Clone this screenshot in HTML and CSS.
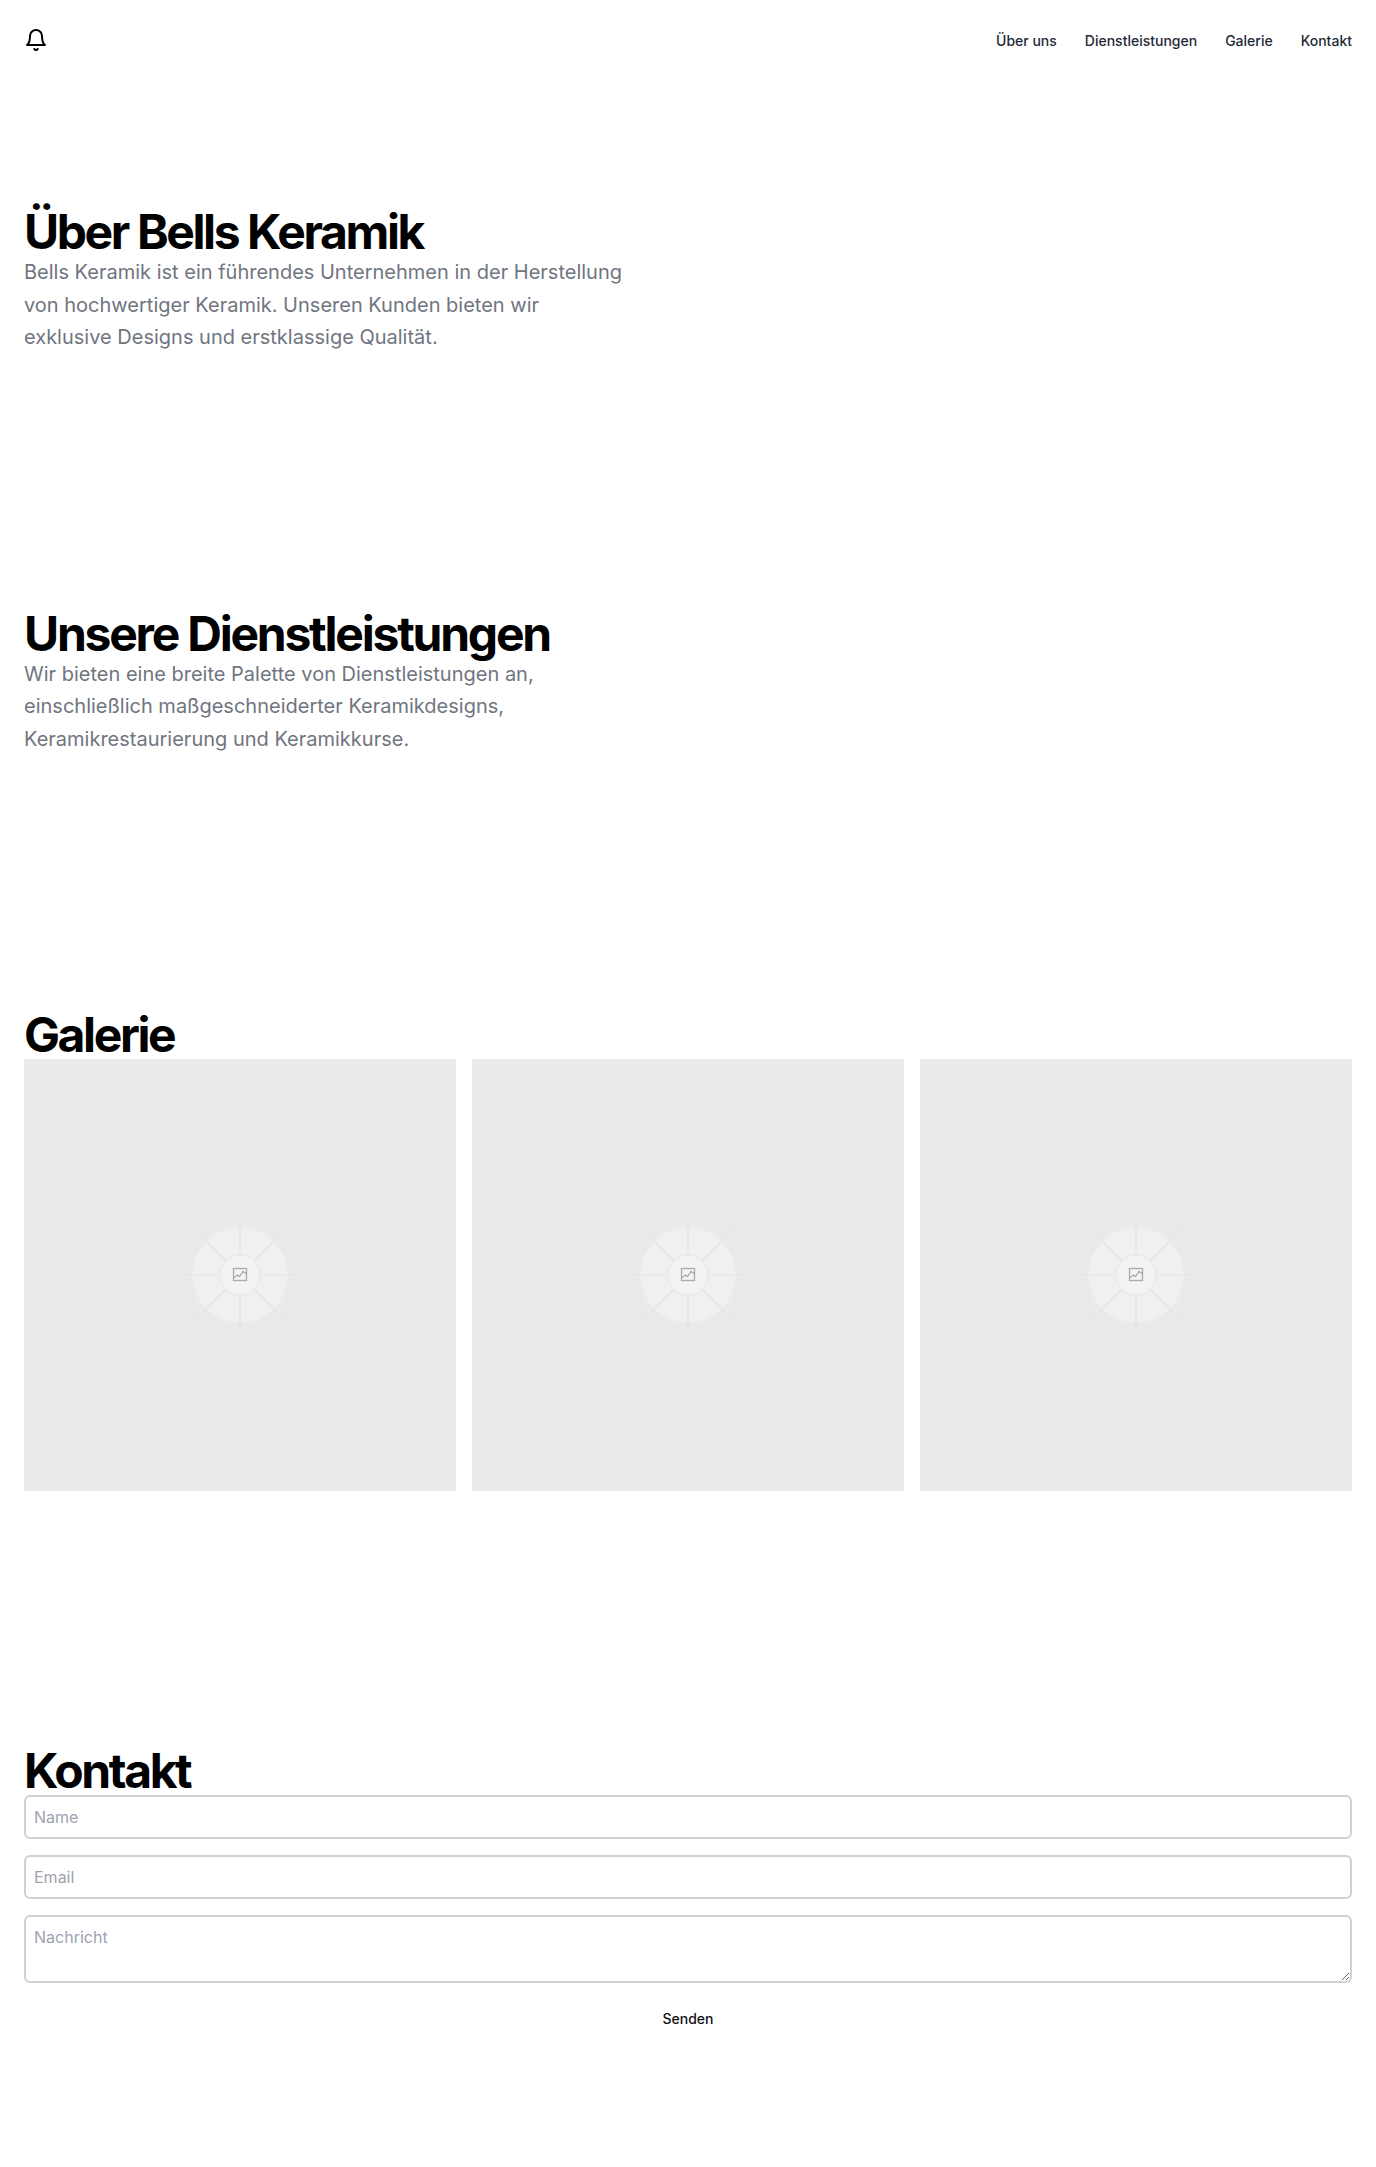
FILE: index.html

```html
<!DOCTYPE html>
<html lang="de">
<head>
    <meta charset="UTF-8">
    <meta name="viewport" content="width=device-width, initial-scale=1.0">
    <title>Bells Keramik</title>
    <link rel="stylesheet" href="styles.css">
</head>
<body>

    <!-- gallery placeholder, used three times below -->
    <svg class="defs" width="0" height="0">
        <defs>
            <radialGradient id="ray" gradientUnits="userSpaceOnUse" cx="0" cy="0" r="86">
                <stop offset="0.7" stop-color="#e3e3e3"/>
                <stop offset="1" stop-color="#e3e3e3" stop-opacity="0"/>
            </radialGradient>
            <symbol id="placeholder" viewBox="-85 -85 170 170">
                <circle r="48" fill="#f0f0f0" stroke="#ececec"/>
                <path d="M0 -62V-20M0 20V62M-62 0H-20M20 0H62M-60 -60L-14 -14M14 14L60 60M60 -60L14 -14M-14 14L-60 60" fill="none" stroke="url(#ray)" stroke-width="1.200"/>
                <circle r="20" fill="#f3f3f3" stroke="#e6e6e6"/>
                <rect x="-6.500" y="-6.500" width="13" height="12" fill="none" stroke="#aaa" stroke-width="1.300"/>
                <path d="M-6.500 3L-2.500 0L-0.500 1.500L3 -3.500L6.500 -1" fill="none" stroke="#aaa" stroke-width="1.300"/>
            </symbol>
        </defs>
    </svg>

    <header class="header">
        <a class="logo" href="#">
            <svg width="24" height="24" viewBox="0 0 24 24" fill="none" stroke="currentColor" stroke-width="2" stroke-linecap="round" stroke-linejoin="round">
                <path d="M6 8a6 6 0 0 1 12 0c0 7 3 9 3 9H3s3-2 3-9"/>
                <path d="M10.3 21a1.94 1.94 0 0 0 3.4 0"/>
            </svg>
        </a>
        <nav class="nav">
            <a href="#ueber">Über uns</a>
            <a href="#dienste">Dienstleistungen</a>
            <a href="#galerie">Galerie</a>
            <a href="#kontakt">Kontakt</a>
        </nav>
    </header>

    <section class="section" id="ueber">
        <h1>Über Bells Keramik</h1>
        <p class="lead">Bells Keramik ist ein führendes Unternehmen in der Herstellung von hochwertiger Keramik. Unseren Kunden bieten wir exklusive Designs und erstklassige Qualität.</p>
    </section>

    <section class="section" id="dienste">
        <h1>Unsere Dienstleistungen</h1>
        <p class="lead">Wir bieten eine breite Palette von Dienstleistungen an, einschließlich maßgeschneiderter Keramikdesigns, Keramikrestaurierung und Keramikkurse.</p>
    </section>

    <section class="section" id="galerie">
        <h1>Galerie</h1>
        <div class="gallery">
            <div class="placeholder"><svg width="170" height="170"><use href="#placeholder"/></svg></div>
            <div class="placeholder"><svg width="170" height="170"><use href="#placeholder"/></svg></div>
            <div class="placeholder"><svg width="170" height="170"><use href="#placeholder"/></svg></div>
        </div>
    </section>

    <section class="section" id="kontakt">
        <h1>Kontakt</h1>
        <form class="form">
            <input type="text" name="name" placeholder="Name">
            <input type="email" name="email" placeholder="Email">
            <textarea name="message" placeholder="Nachricht"></textarea>
            <button type="submit">Senden</button>
        </form>
    </section>

</body>
</html>
```

FILE: styles.css

```css
* {
    box-sizing: border-box;
}

body {
    margin: 0;
    font-family: Inter, "Liberation Sans", sans-serif;
    color: #000;
    background: #fff;
}

.defs {
    position: absolute;
}

.header {
    display: flex;
    justify-content: space-between;
    align-items: center;
    height: 80px;
    padding: 0 24px;
}

.logo {
    display: flex;
    color: #000;
}

.nav {
    display: flex;
    gap: 28px;
    padding-top: 2px;
}

.nav a {
    font-size: 14px;
    font-weight: 500;
    line-height: 20px;
    color: #1f2937;
    text-decoration: none;
}

.section {
    padding: 128px 24px;
}

h1 {
    margin: 0;
    font-size: 48px;
    font-weight: 700;
    line-height: 48px;
    letter-spacing: -2.4px;
}

#dienste h1 {
    letter-spacing: -2.23px;
}

.lead {
    margin: 0;
    max-width: 600px;
    font-size: 20px;
    line-height: 32.5px;
    color: #70757f;
}

.gallery {
    display: grid;
    grid-template-columns: repeat(3, 1fr);
    gap: 16px;
}

.placeholder {
    display: flex;
    align-items: center;
    justify-content: center;
    aspect-ratio: 1;
    background: #eaeaea;
}

.form {
    display: flex;
    flex-direction: column;
    gap: 16px;
}

input,
textarea {
    display: block;
    width: 100%;
    padding: 8px;
    font-family: inherit;
    font-size: 16px;
    line-height: 24px;
    border: 2px solid #d1d1d6;
    border-radius: 6px;
    outline: none;
    background: #fff;
}

input {
    height: 44px;
}

textarea {
    height: 68px;
}

input::placeholder,
textarea::placeholder {
    color: #9ca3af;
}

button {
    align-self: center;
    padding: 10px 16px;
    font-family: inherit;
    font-size: 14px;
    font-weight: 500;
    line-height: 20px;
    color: #111;
    background: none;
    border: none;
}
```
